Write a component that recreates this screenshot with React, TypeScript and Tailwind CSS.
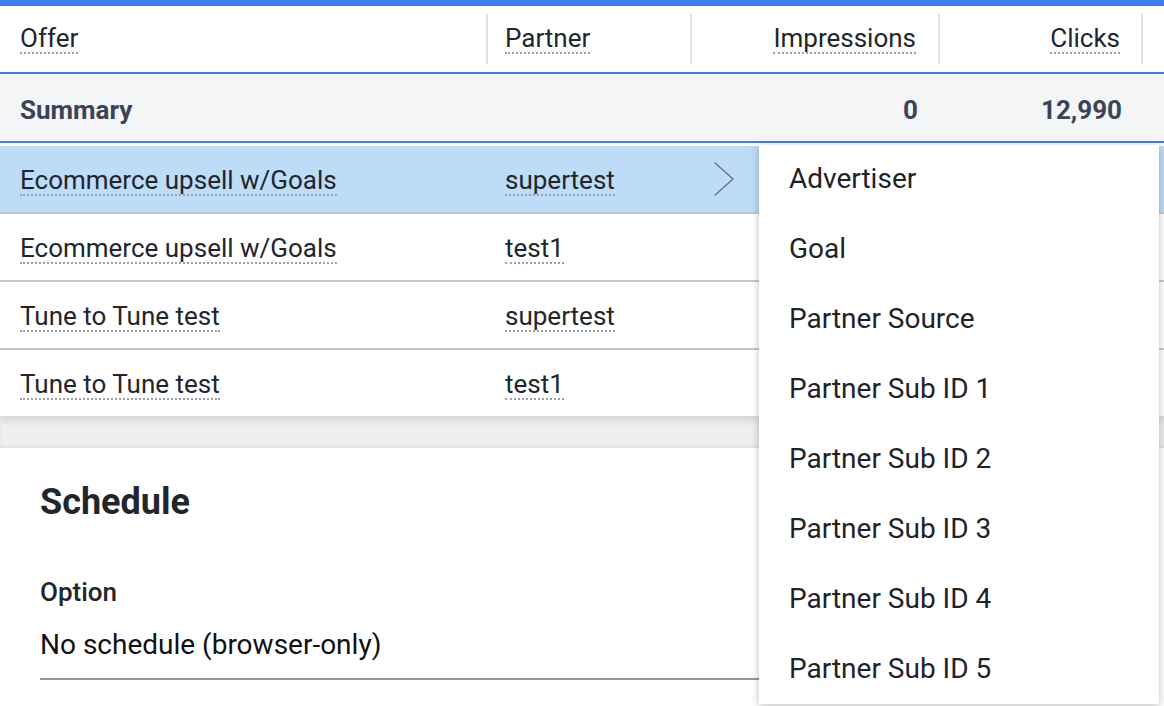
import { ReactNode } from 'react';

const rows = [
  { offer: 'Ecommerce upsell w/Goals', partner: 'supertest', active: true },
  { offer: 'Ecommerce upsell w/Goals', partner: 'test1' },
  { offer: 'Tune to Tune test', partner: 'supertest' },
  { offer: 'Tune to Tune test', partner: 'test1' },
];

const menuItems = [
  'Advertiser',
  'Goal',
  'Partner Source',
  'Partner Sub ID 1',
  'Partner Sub ID 2',
  'Partner Sub ID 3',
  'Partner Sub ID 4',
  'Partner Sub ID 5',
];

function Dotted({ children }: { children: ReactNode }) {
  return (
    <span className="border-b-2 border-dotted border-[#9ba1ab] pb-[1px] leading-none">
      {children}
    </span>
  );
}

export default function App() {
  return (
    <div className="relative w-[1164px] h-[706px] overflow-hidden bg-white font-['Roboto',sans-serif] text-[#22262c]">
      {/* table */}
      <div className="bg-white border-t-[6px] border-[#3b7cf0] shadow-[0_4px_8px_rgba(0,0,0,0.12)] relative z-10">
        <div className="flex h-[68px] border-b-2 border-[#3b7cf0] text-[26px]">
          <div className="w-[488px] my-[8px] border-r-2 border-[#dde0e4] flex items-center pl-5">
            <Dotted>Offer</Dotted>
          </div>
          <div className="w-[204px] my-[8px] border-r-2 border-[#dde0e4] flex items-center pl-[17px]">
            <Dotted>Partner</Dotted>
          </div>
          <div className="w-[248px] my-[8px] border-r-2 border-[#dde0e4] flex items-center justify-end pr-[22px]">
            <Dotted>Impressions</Dotted>
          </div>
          <div className="w-[203px] my-[8px] border-r-2 border-[#dde0e4] flex items-center justify-end pr-[21px]">
            <Dotted>Clicks</Dotted>
          </div>
          <div className="flex-1" />
        </div>
        <div className="pt-[2px] bg-white">
          <div className="flex h-[67px] pt-[4px] items-center bg-[#f4f5f7] border-b-2 border-[#3b7cf0] text-[26px] font-bold text-[#3a4456]">
            <div className="w-[488px] pl-5">Summary</div>
            <div className="w-[204px]" />
            <div className="w-[248px] text-right pr-[22px]">0</div>
            <div className="w-[203px] text-right pr-[21px]">12,990</div>
          </div>
        </div>
        <div className="pt-[3px]">
          {rows.map((r, i) => (
            <div
              key={i}
              className={
                'flex items-center pt-[5px] text-[26px] ' +
                (i < rows.length - 1 ? 'h-[68px] border-b-2 border-[#c5c8cd] ' : 'h-[66px] ') +
                (r.active ? 'bg-[#bcdcf8]' : 'bg-white')
              }
            >
              <div className="w-[488px] pl-5 flex">
                <Dotted>{r.offer}</Dotted>
              </div>
              <div className="w-[204px] pl-[17px] flex">
                <Dotted>{r.partner}</Dotted>
              </div>
              <div className="w-[248px] pl-[21px] flex -mt-[5px]">
                {r.active && (
                  <svg width="22" height="36" viewBox="0 0 22 36" fill="none">
                    <path d="M1.5 1.5 L20 18 L1.5 34.5" stroke="#6f7580" strokeWidth="1.5" />
                  </svg>
                )}
              </div>
            </div>
          ))}
        </div>
      </div>

      <div className="h-[32px] bg-[#eeeff1] shadow-[inset_0_-2px_3px_rgba(0,0,0,0.06)]" />

      {/* schedule */}
      <div className="bg-white px-10 pt-[36px]">
        <h2 className="text-[36px] font-bold text-[#22262c] leading-none">Schedule</h2>
        <div className="mt-[59px] text-[26px] font-medium text-[#22262c] leading-none">Option</div>
        <div className="mt-[26px] text-[28px] text-[#111] leading-none pb-[19px] border-b-2 border-[#8e99a8]">
          No schedule (browser-only)
        </div>
      </div>

      {/* menu */}
      <div className="absolute left-[759px] top-[145px] w-[400px] h-[559px] bg-white shadow-[0_2px_8px_rgba(0,0,0,0.25)] z-20">
        {menuItems.map((m) => (
          <div key={m} className="h-[70px] pb-[3px] flex items-center pl-[30px] text-[28px] text-[#1f2329]">
            {m}
          </div>
        ))}
      </div>
    </div>
  );
}
